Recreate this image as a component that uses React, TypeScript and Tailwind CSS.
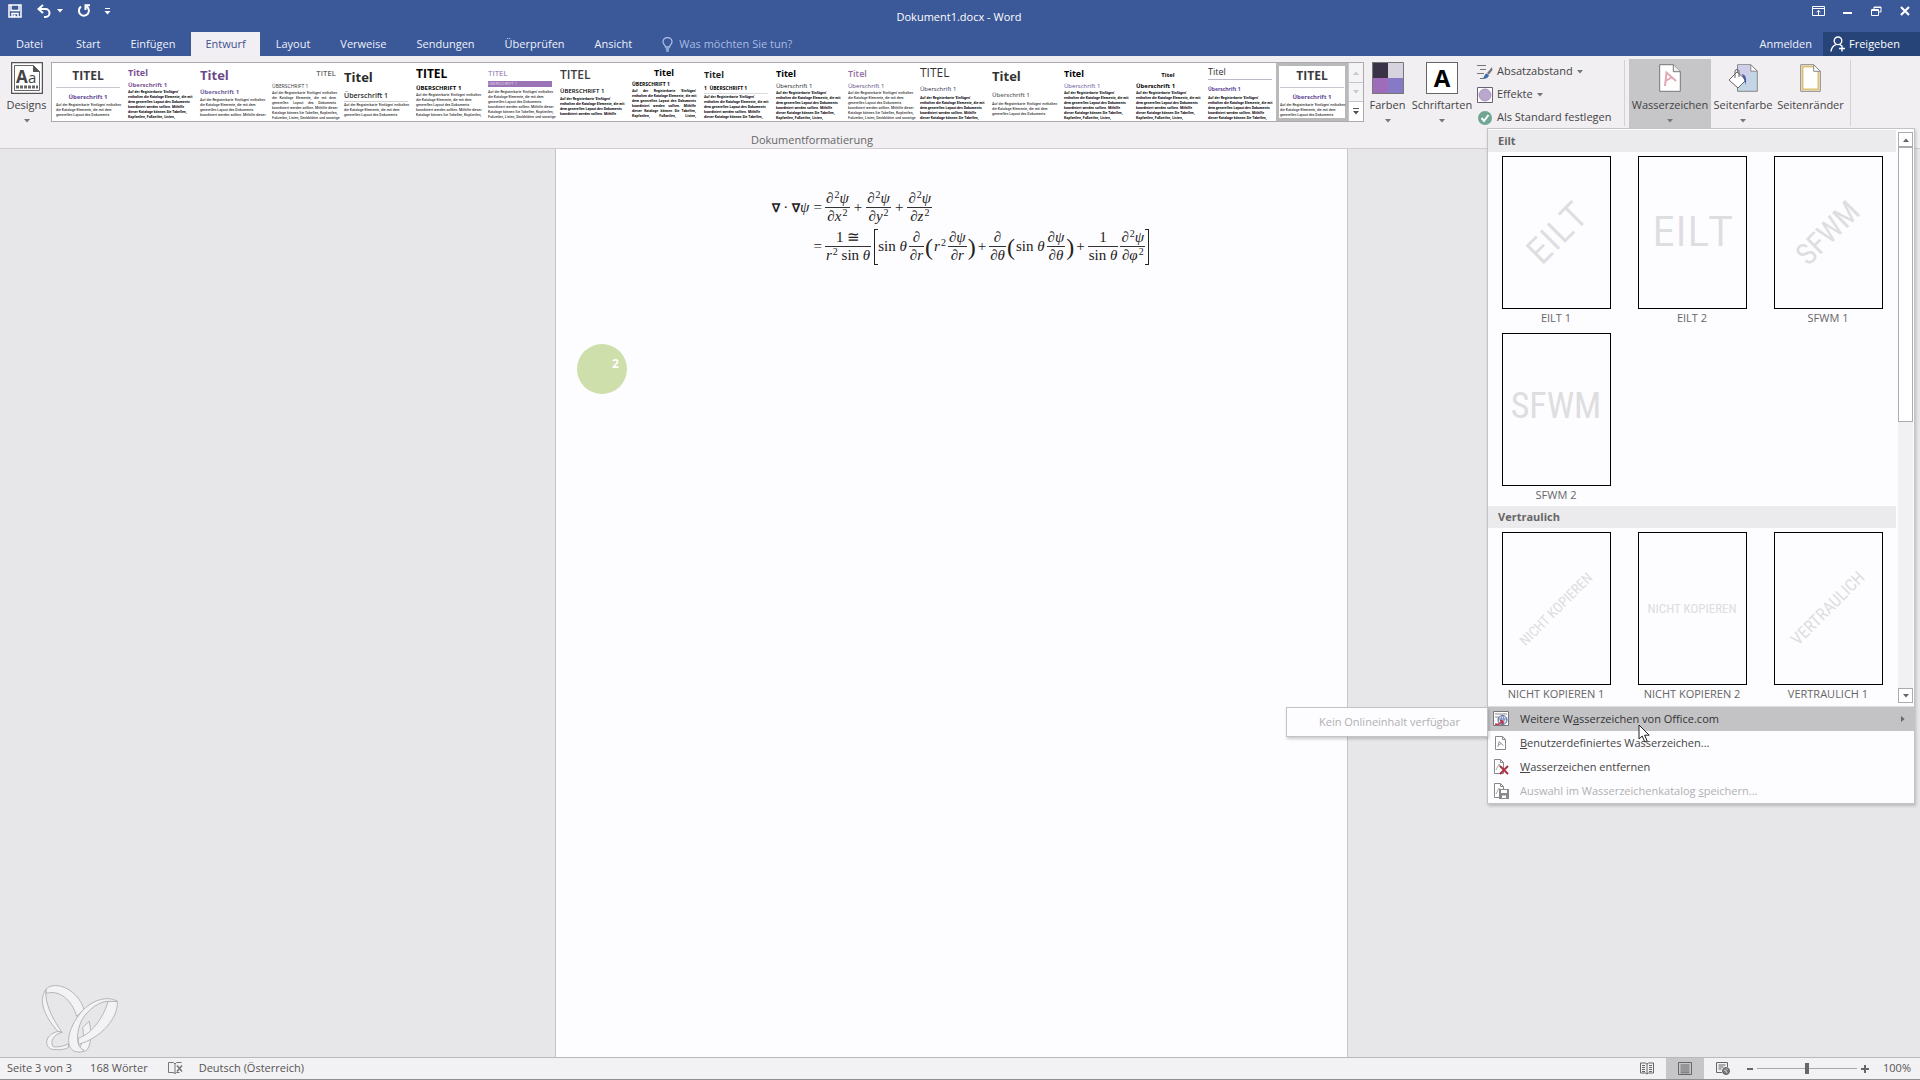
import React from 'react';

interface StyleThumb {
  title: string;
  titleClass: string;
  heading: string;
  headingClass: string;
  lines: number;
  dense?: boolean;
  bodyClass?: string;
}

// Regular body copy wraps a little later than the heavier one
const BODY_LINES = [
  "Auf der Registerkarte 'Einfügen' enthalten",
  'die Kataloge Elemente, die mit dem',
  'generellen Layout des Dokuments',
  'koordiniert werden sollten. Mithilfe dieser',
  'Kataloge können Sie Tabellen, Kopfzeilen,',
  'Fußzeilen, Listen, Deckblätter und sonstige',
];

const DENSE_LINES = [
  "Auf der Registerkarte 'Einfügen'",
  'enthalten die Kataloge Elemente, die mit',
  'dem generellen Layout des Dokuments',
  'koordiniert werden sollten. Mithilfe',
  'dieser Kataloge können Sie Tabellen,',
  'Kopfzeilen, Fußzeilen, Listen,',
];

const OFFICE_THUMB: StyleThumb = {
  title: 'TITEL',
  titleClass: 'h-[24px] justify-center border-b border-[#c9c5cf] text-[12px] font-bold text-[#3d3a42]',
  heading: 'Überschrift 1',
  headingClass: 'h-[14px] justify-center pt-[4px] text-[6px] font-bold text-[#5f4495]',
  lines: 3,
};

const styleThumbs: StyleThumb[] = [
  OFFICE_THUMB,
  {
    title: 'Titel',
    titleClass: 'h-[17px] text-[9px] font-bold text-[#7a4f92]',
    heading: 'Überschrift 1',
    headingClass: 'h-[8px] text-[6px] font-bold text-[#7a4f92]',
    lines: 6,
    dense: true,
  },
  {
    title: 'Titel',
    titleClass: 'h-[22px] text-[13px] font-bold text-[#6b4a8a]',
    heading: 'Überschrift 1',
    headingClass: 'h-[11px] text-[6px] font-bold text-[#6b5b9c]',
    lines: 4,
  },
  {
    title: 'TITEL',
    titleClass: 'h-[18px] justify-end text-[8px] text-[#333]',
    heading: 'ÜBERSCHRIFT 1',
    headingClass: 'h-[8px] text-[5px] text-[#333]',
    lines: 6,
    bodyClass: '[text-align-last:justify]',
  },
  {
    title: 'Titel',
    titleClass: 'h-[26px] text-[13px] font-bold text-[#2b2b2b]',
    heading: 'Überschrift 1',
    headingClass: 'h-[12px] border-b border-[#cfcfcf] text-[7px] font-semibold text-[#2b2b2b]',
    lines: 3,
  },
  {
    title: 'TITEL',
    titleClass: 'h-[20px] text-[12px] font-bold text-black',
    heading: 'ÜBERSCHRIFT 1',
    headingClass: 'h-[8px] text-[6px] font-bold text-black',
    lines: 5,
  },
  {
    title: 'TITEL',
    titleClass: 'h-[17px] text-[8px] text-[#8c6ba8]',
    heading: 'ÜBERSCHRIFT 1',
    headingClass: 'mb-[2px] h-[6px] bg-[#9a74b4] text-[4px] text-[#e5d8ee]',
    lines: 6,
  },
  {
    title: 'TITEL',
    titleClass: 'h-[21px] text-[12px] font-semibold text-[#3d3d3d]',
    heading: 'ÜBERSCHRIFT 1',
    headingClass: 'h-[11px] text-[6px] font-semibold text-black',
    lines: 4,
    dense: true,
  },
  {
    title: 'Titel',
    titleClass: 'h-[17px] justify-center text-[9px] font-bold text-black',
    heading: 'ÜBERSCHRIFT 1',
    headingClass: 'h-[7px] text-[5px] font-bold text-black',
    lines: 6,
    dense: true,
    bodyClass: '[text-align-last:justify]',
  },
  {
    title: 'Titel',
    titleClass: 'h-[20px] text-[9px] font-bold text-[#1f1f1f]',
    heading: '1  ÜBERSCHRIFT 1',
    headingClass: 'h-[10px] border-b border-[#dddddd] text-[5px] font-bold text-black',
    lines: 5,
    dense: true,
  },
  {
    title: 'Titel',
    titleClass: 'h-[18px] text-[9px] font-bold text-black',
    heading: 'Überschrift 1',
    headingClass: 'h-[8px] text-[6px] text-[#222]',
    lines: 6,
    dense: true,
  },
  {
    title: 'Titel',
    titleClass: 'h-[18px] text-[9px] font-semibold text-[#94709f]',
    heading: 'Überschrift 1',
    headingClass: 'h-[8px] text-[6px] text-[#55467e]',
    lines: 6,
  },
  {
    title: 'TITEL',
    titleClass: 'h-[18px] text-[12px] text-[#333]',
    heading: 'Überschrift 1',
    headingClass: 'h-[13px] text-[6px] text-[#2f2a4a]',
    lines: 5,
    dense: true,
  },
  {
    title: 'Titel',
    titleClass: 'h-[25px] text-[13px] font-bold text-[#333]',
    heading: 'Überschrift 1',
    headingClass: 'h-[12px] text-[6px] font-semibold text-[#666]',
    lines: 3,
  },
  {
    title: 'Titel',
    titleClass: 'h-[18px] text-[9px] font-bold text-black',
    heading: 'Überschrift 1',
    headingClass: 'h-[8px] text-[6px] text-[#5a4b9a]',
    lines: 6,
    dense: true,
  },
  {
    title: 'Titel',
    titleClass: 'h-[18px] justify-center pt-[3px] text-[6px] font-bold text-black',
    heading: 'Überschrift 1',
    headingClass: 'h-[8px] text-[6px] font-bold text-black',
    lines: 6,
    dense: true,
  },
  {
    title: 'Titel',
    titleClass: 'h-[16px] border-b border-[#bdb7c8] text-[9px] text-[#333]',
    heading: 'Überschrift 1',
    headingClass: 'h-[15px] pt-[4px] text-[5px] font-bold text-[#5a3f96]',
    lines: 5,
    dense: true,
  },
  OFFICE_THUMB,
];

const tabs = ['Datei', 'Start', 'Einfügen', 'Entwurf', 'Layout', 'Verweise', 'Sendungen', 'Überprüfen', 'Ansicht'];

const watermarkGroups = [
  {
    name: 'Eilt',
    items: [
      { label: 'EILT 1', text: 'EILT', textClass: 'text-[36px] -rotate-45' },
      { label: 'EILT 2', text: 'EILT', textClass: 'mb-[6px] text-[42px]' },
      { label: 'SFWM 1', text: 'SFWM', textClass: "text-[30px] -rotate-45 font-['Roboto_Condensed','Open_Sans',sans-serif]" },
      { label: 'SFWM 2', text: 'SFWM', textClass: "mb-[8px] text-[36px] font-['Roboto_Condensed','Open_Sans',sans-serif]" },
    ],
  },
  {
    name: 'Vertraulich',
    items: [
      { label: 'NICHT KOPIEREN 1', text: 'NICHT KOPIEREN', textClass: "text-[14px] -rotate-45 font-['Roboto_Condensed','Open_Sans',sans-serif]" },
      { label: 'NICHT KOPIEREN 2', text: 'NICHT KOPIEREN', textClass: "text-[13px] font-['Roboto_Condensed','Open_Sans',sans-serif]" },
      { label: 'VERTRAULICH 1', text: 'VERTRAULICH', textClass: "text-[17px] -rotate-45 font-['Roboto_Condensed','Open_Sans',sans-serif]" },
    ],
  },
];

const Caret = ({ className = '' }: { className?: string }) => (
  <svg viewBox="0 0 6 4" className={`h-[4px] w-[6px] ${className}`} fill="currentColor" aria-hidden="true">
    <path d="M0 0h6L3 3.6z" />
  </svg>
);

const TitleBar = () => (
  <div className="grid h-8 grid-cols-3 text-white">
    <div className="flex items-start gap-[10px] pl-2 pt-[4px]">
      <button aria-label="Speichern">
        <svg viewBox="0 0 14 14" className="h-[14px] w-[14px]" fill="none" stroke="currentColor" strokeWidth="1.5">
          <path d="M1 1h12v12H1zM3 1v5.5h8V1" />
          <path d="M4 13V9.5h6V13" />
          <path d="M5.5 10.5h2V13h-2z" fill="currentColor" stroke="none" />
        </svg>
      </button>
      <button aria-label="Rückgängig" className="flex items-center gap-[5px] pl-[5px]">
        <svg viewBox="0 0 15 14" className="h-[14px] w-[15px]" fill="none" stroke="currentColor" strokeWidth="2">
          <path d="M6 1 1.5 5 6 9M2 5h6.5a4 4 0 0 1 0 8H7" />
        </svg>
        <Caret />
      </button>
      <button aria-label="Wiederholen" className="pl-[4px]">
        <svg viewBox="0 0 14 14" className="h-[14px] w-[14px]" fill="none" stroke="currentColor" strokeWidth="2">
          <path d="M4 2.6A5 5 0 1 0 9.5 2.4" />
          <path d="M8.5 6V1.2H13" />
        </svg>
      </button>
      <button aria-label="Symbolleiste anpassen" className="pl-[3px] pt-[4px]">
        <svg viewBox="0 0 7 7" className="h-[7px] w-[7px]" fill="currentColor">
          <path d="M1 0h5v1H1zM0.5 3h6L3.5 6.4z" />
        </svg>
      </button>
    </div>
    <h1 className="flex items-center justify-center pr-[2px] pt-[2px] text-[11px]">Dokument1.docx - Word</h1>
    <div className="flex items-start justify-end gap-[18px] pr-[10px] pt-[6px]">
      <button aria-label="Menüband-Anzeigeoptionen">
        <svg viewBox="0 0 13 10" className="h-[10px] w-[13px]" fill="none" stroke="currentColor">
          <path d="M.5.5h12v9H.5zM.5 2.5h12M6.5 9V4.500M4.500 6.300l2-2 2 2" />
        </svg>
      </button>
      <button aria-label="Minimieren">
        <svg viewBox="0 0 10 10" className="h-[10px] w-[10px]" fill="currentColor">
          <path d="M0 6h9v2H0z" />
        </svg>
      </button>
      <button aria-label="Verkleinern">
        <svg viewBox="0 0 11 10" className="h-[10px] w-[11px]" fill="none" stroke="currentColor">
          <path d="M3 3V1h7v5H8M3 1.500h7M.5 3.500h7v6h-7zM.5 4.500h7" />
        </svg>
      </button>
      <button aria-label="Schließen">
        <svg viewBox="0 0 10 10" className="h-[10px] w-[10px]" fill="none" stroke="currentColor" strokeWidth="2.2">
          <path d="m1 1 8 8M9 1 1 9" />
        </svg>
      </button>
    </div>
  </div>
);

const TabBar = () => (
  <nav className="flex h-6 items-stretch text-[11px] text-[#eef2fb]">
    {tabs.map(tab => (
      <button
        key={tab}
        className={
          tab === 'Entwurf'
            ? 'mx-px bg-[#f1eff3] px-[14px] text-[#3f4f8f]'
            : tab === 'Datei'
              ? 'mr-[2px] px-4'
              : 'px-[15px]'
        }
      >
        {tab}
      </button>
    ))}
    <label className="ml-[15px] flex items-center gap-[6px] text-[#a9bce4]">
      <svg viewBox="0 0 11 15" className="h-[15px] w-[11px]" fill="none" stroke="currentColor" strokeWidth="1.300">
        <path d="M3.500 10C3.500 8 1 7.500 1 4.800a4.500 4.300 0 0 1 9 0C10 7.500 7.500 8 7.500 10zM3.800 12h3.400M4.200 14h2.600" />
      </svg>
      <input
        type="text"
        aria-label="Was möchten Sie tun?"
        placeholder="Was möchten Sie tun?"
        className="w-[160px] bg-transparent outline-none placeholder:text-[#a9bce4]"
      />
    </label>
    <div className="flex-1" />
    <button className="px-[11px]">Anmelden</button>
    <button className="flex w-[97px] items-center gap-[3px] bg-[#264478] pl-[7px] text-white">
      <svg viewBox="0 0 16 16" className="h-4 w-4" fill="none" stroke="currentColor" strokeWidth="1.400">
        <circle cx="8" cy="4.800" r="3.800" />
        <path d="M1 15.500c.3-3.500 2-5.500 4.800-6.800M10 8.600l1.500 1.200M12 9.500v6M9 12.500h6" />
      </svg>
      Freigeben
    </button>
  </nav>
);

const Thumb = ({ thumb, selected }: { thumb: StyleThumb; selected: boolean }) => {
  const source = thumb.dense ? DENSE_LINES : BODY_LINES;

  return (
    <button
      aria-label={`Designformat ${thumb.title}`}
      className={`flex h-[58px] w-[72px] flex-col px-[4px] pt-px text-left leading-none ${
        selected ? 'shadow-[inset_0_0_0_3px_#b9b8ba]' : ''
      }`}
    >
      <span className={`flex w-full items-center ${thumb.titleClass}`}>{thumb.title}</span>
      <span className={`flex w-full items-center whitespace-pre ${thumb.headingClass}`}>{thumb.heading}</span>
      <span
        className={`w-full font-['Roboto_Condensed','Open_Sans',sans-serif] text-[4px] leading-[5px] text-black ${
          thumb.dense ? 'font-semibold' : ''
        } ${thumb.bodyClass || ''}`}
      >
        {source.slice(0, thumb.lines).map(line => (
          <span key={line} className="block whitespace-nowrap">{line}</span>
        ))}
      </span>
    </button>
  );
};

interface BigButtonProps {
  label: string;
  className?: string;
  caret?: boolean;
  children: React.ReactNode;
}

const BigButton = ({ label, className = '', caret = true, children }: BigButtonProps) => (
  <button className={`flex h-[69px] flex-col items-center pt-[3px] ${className}`}>
    <span className="flex h-8 items-center justify-center">{children}</span>
    <span className="mt-[3px] h-4 leading-4">{label}</span>
    {caret && <Caret className="mt-[6px] text-[#777]" />}
  </button>
);

const SmallButton = ({ label, caret, children }: { label: string; caret?: boolean; children: React.ReactNode }) => (
  <button className="flex h-[23px] items-center gap-[4px]">
    {children}
    {label}
    {caret && <Caret className="text-[#777]" />}
  </button>
);

const Ribbon = () => (
  <div className="flex h-[93px] border-b border-[#cfcdd1] bg-[#f1eff2] text-[11px] text-[#444]">
    <div className="flex flex-col pt-[3px]">
      <div className="flex">
        <BigButton label="Designs" className="w-[51px] pl-[2px]">
          <svg viewBox="0 0 32 32" className="h-8 w-8">
            <path d="M.5.5h31v31H.5z" fill="#fff" stroke="#555" strokeWidth="1.500" />
            <path d="M3.500 3.500h19l6 6v19h-25z" fill="#fff" stroke="#666" />
            <path d="M22 3v7h7z" fill="#555" />
            <text x="5" y="21" fontSize="17" fontWeight="bold" fontFamily="Open Sans" fill="#444">A</text>
            <text x="17" y="21" fontSize="15" fontFamily="Open Sans" fill="#444">a</text>
            <path d="M5 25h22" stroke="#666" strokeWidth="3" strokeDasharray="3 1" />
          </svg>
        </BigButton>
        <div className="mt-[3px] flex h-[60px] border border-[#ababad] bg-white">
          {styleThumbs.map((thumb, index) => (
            <Thumb key={index} thumb={thumb} selected={index === styleThumbs.length - 1} />
          ))}
          <div className="flex w-[15px] flex-col divide-y divide-[#c6c6c8] border-l border-[#c6c6c8] bg-[#f4f3f5]">
            <button aria-label="Nach oben" className="flex h-[20px] items-center justify-center text-[#c9c9cb]">
              <Caret className="rotate-180" />
            </button>
            <button aria-label="Nach unten" className="flex h-[19px] items-center justify-center text-[#c9c9cb]">
              <Caret />
            </button>
            <button aria-label="Weitere" className="flex flex-1 flex-col items-center justify-center gap-[2px] bg-white text-[#555]">
              <span className="h-px w-[6px] bg-[#555]" />
              <Caret />
            </button>
          </div>
        </div>
        <BigButton label="Farben" className="w-[47px]">
          <svg viewBox="0 0 32 32" className="h-8 w-8">
            <path d="M0 0h16v16H0z" fill="#3a3348" />
            <path d="M16 0h16v16H16z" fill="#d6d2de" />
            <path d="M0 16h16v16H0z" fill="#9f6bbb" />
            <path d="M16 16h16v16H16z" fill="#8679c6" />
            <path d="M.5.5h31v31H.5z" fill="none" stroke="#777" />
          </svg>
        </BigButton>
        <BigButton label="Schriftarten" className="w-[62px]">
          <span className="flex h-8 w-8 items-center justify-center border border-[#666] bg-white text-[24px] font-bold text-black">
            A
          </span>
        </BigButton>
        <div className="flex w-[151px] flex-col pl-1 pt-px">
          <SmallButton label="Absatzabstand" caret>
            <svg viewBox="0 0 16 16" className="h-4 w-4" fill="none">
              <path d="M0 1.500h9M3 5.500h6M0 9.500h7M3 14.500h4" stroke="#777" />
              <path d="m15 3-5 6 2 1.500L15.500 6z" fill="#777" />
              <path d="M9.500 9.500c-2 .5-2 3.500-4 5 3 1 6-.5 6.500-3.500z" fill="#3f6fa8" />
            </svg>
          </SmallButton>
          <SmallButton label="Effekte" caret>
            <svg viewBox="0 0 16 16" className="h-4 w-4">
              <path d="M.5.5h15v15H.5z" fill="#fff" stroke="#6a6378" />
              <circle cx="8" cy="8" r="6" fill="#bba9cd" stroke="#9c86b4" strokeWidth=".8" />
            </svg>
          </SmallButton>
          <SmallButton label="Als Standard festlegen">
            <svg viewBox="0 0 16 16" className="h-4 w-4">
              <circle cx="8" cy="8" r="7" fill="#6fa593" />
              <path d="m4.500 8 2.500 3 4.500-6" fill="none" stroke="#fff" strokeWidth="2" />
            </svg>
          </SmallButton>
        </div>
      </div>
      <div className="mt-[2px] text-center leading-[18px] text-[#666]">Dokumentformatierung</div>
    </div>
    <div className="mb-[22px] mt-1 flex border-x border-[#d3d2d5] pr-1">
      <BigButton label="Wasserzeichen" className="-mt-px ml-[4px] w-[82px] bg-[#c6c5c7]">
        <svg viewBox="0 0 22 28" className="h-7 w-[22px]">
          <path d="M.7.7h13.600l7 7v19.600H.7z" fill="#fff" stroke="#777" />
          <path d="M14.300.7v7h7" fill="#eee" stroke="#777" />
          <path d="M6 22 7.500 8.500 17 17M6.500 17l6-3.500" fill="none" stroke="#e0a9b3" strokeWidth="2" />
        </svg>
      </BigButton>
      <BigButton label="Seitenfarbe" className="-mt-px w-[64px]">
        <svg viewBox="0 0 30 28" className="h-7 w-[30px]">
          <path d="M9.500.7h13.300l6.500 6.500v20.100H9.500z" fill="#c3d5e6" stroke="#888" />
          <path d="M10 1h12l5 6-17 8z" fill="#cfcdea" />
          <path d="M22.800.7v6.500h6.500z" fill="#fff" stroke="#888" />
          <path d="m1 16 8-8 9 8-8 8z" fill="#fff" stroke="#666" />
          <path d="M7 14V7.500a2 2 0 0 1 4 0V13" fill="none" stroke="#666" />
          <path d="M14 10c4 1 5 5 3.500 11-.5-4-2-6-3.500-11z" fill="#4e5b9c" />
        </svg>
      </BigButton>
      <BigButton label="Seitenränder" caret={false} className="-mt-px w-[71px]">
        <svg viewBox="0 0 21 28" className="h-7 w-[21px]">
          <path d="M.7.7h13l6.600 6.600v20H.7z" fill="#fff" stroke="#888" />
          <path d="M2.500 2.500h10.500l5.500 5.500v17.500h-16z" fill="none" stroke="#dcc37c" strokeWidth="2" />
          <path d="M13.700.7v6.600h6.600z" fill="#fff" stroke="#888" />
        </svg>
      </BigButton>
    </div>
  </div>
);

const Sq = () => <sup className="top-[-5px] pl-px text-[10px] not-italic leading-none">2</sup>;
const Up = ({ children }: { children: React.ReactNode }) => <span className="not-italic">{children}</span>;
const Plus = () => <span className="px-px not-italic">+</span>;

const Frac = ({ num, den }: { num: React.ReactNode; den: React.ReactNode }) => (
  <span className="inline-flex flex-col text-center">
    <span className="h-[18px] border-b border-[#333] px-px leading-[17px]">{num}</span>
    <span className="h-[17px] px-px leading-[17px]">{den}</span>
  </span>
);

const Paren = ({ children }: { children: string }) => (
  <span className="flex w-[6px] justify-center text-[24px] not-italic leading-8">{children}</span>
);

const Formula = () => (
  <div className="grid w-max grid-cols-[42px_auto] font-['Liberation_Serif','Times_New_Roman',serif] text-[15px] italic text-[#222]">
    <div className="flex h-[39px] items-center whitespace-nowrap">
      <Up><b className="text-[12px]">∇</b> · <b className="text-[12px]">∇</b></Up>ψ
    </div>
    <div className="flex h-[39px] items-center gap-[3px]">
      <Up>=</Up>
      <Frac num={<>∂<Sq />ψ</>} den={<>∂x<Sq /></>} />
      <Plus />
      <Frac num={<>∂<Sq />ψ</>} den={<>∂y<Sq /></>} />
      <Plus />
      <Frac num={<>∂<Sq />ψ</>} den={<>∂z<Sq /></>} />
    </div>
    <div />
    <div className="flex h-[39px] items-center gap-[3px]">
      <Up>=</Up>
      <Frac num={<Up>1 ≅</Up>} den={<>r<Sq /> <Up>sin</Up> θ</>} />
      <span className="flex h-[36px] items-center gap-[2px] border-x border-[#222]">
        <span className="-mr-[2px] h-[36px] w-[3px] border-y border-[#222]" />
        <span className="whitespace-nowrap"><Up>sin</Up> θ</span>
        <Frac num="∂" den="∂r" />
        <Paren>(</Paren>
        <span>r<Sq /></span>
        <Frac num="∂ψ" den="∂r" />
        <Paren>)</Paren>
        <Plus />
        <Frac num="∂" den="∂θ" />
        <Paren>(</Paren>
        <span className="whitespace-nowrap"><Up>sin</Up> θ</span>
        <Frac num="∂ψ" den="∂θ" />
        <Paren>)</Paren>
        <Plus />
        <Frac num={<Up>1</Up>} den={<><Up>sin</Up> θ</>} />
        <Frac num={<>∂<Sq />ψ</>} den={<>∂φ<Sq /></>} />
        <span className="-ml-[2px] h-[36px] w-[3px] border-y border-[#222]" />
      </span>
    </div>
  </div>
);

const Butterfly = () => (
  <svg viewBox="125 70 230 208" className="h-[69px] w-[76px]" fill="#f3f3f5" stroke="#b4b4b8" strokeWidth="3" strokeLinejoin="round">
    <path d="M137 86c18-26 92-10 115 60l-22 22c-14-50-52-82-93-70z" />
    <path d="M137 86c-28 38 4 92 36 127l13 3C158 178 132 128 137 86z" />
    <path d="M173 213c-44 10-42 54-12 55 18 2 32 0 44-6v-12c-14 9-30 10-45 10-14-14 2-40 26-44z" />
    <path d="M268 182c6 30 8 66-6 86-8 10-30 8-24-4 14-24 14-44 10-62z" />
    <path d="M353 122c4 50-50 112-118 130v-18c36-12 74-56 90-112z" />
    <path d="M353 122c-28-18-84-6-118 44-34 46-40 98-10 108 12 3 22 2 27-4-26-8-24-58-6-92 18-32 54-56 79-56z" />
  </svg>
);

const DocumentArea = () => (
  <main className="relative flex flex-1 justify-center bg-[#e7e6e9] pr-[18px]">
    <article className="w-[793px] border-x border-[#c6c5ca] bg-[#fdfcfe] pl-[216px] pt-[39px]">
      <Formula />
    </article>
    {/* Click marker and channel logo float over the canvas */}
    <div className="absolute left-[577px] top-[195px] h-[50px] w-[50px] rounded-full bg-[#cfdfab] pl-[35px] pt-[13px] text-[12px] font-bold leading-[14px] text-white">
      2
    </div>
    <div className="absolute bottom-[4px] left-[42px]">
      <Butterfly />
    </div>
  </main>
);

const WatermarkGallery = () => (
  <div className="flex pb-px pt-px">
    <div className="w-[408px]">
      {watermarkGroups.map(group => (
        <section key={group.name} className="mb-[2px]">
          <h2 className="mb-1 h-[22px] bg-[#ebeaec] pl-[10px] text-[11px] font-bold leading-[22px] text-[#666]">{group.name}</h2>
          <div className="grid grid-cols-3 gap-y-[6px]">
            {group.items.map(item => (
              <button key={item.label} className="flex flex-col items-center">
                <span className="flex h-[153px] w-[109px] items-center justify-center border border-black bg-[#fdfcfe]">
                  <span className={`whitespace-nowrap leading-none text-[#dedde0] ${item.textClass}`}>{item.text}</span>
                </span>
                <span className="h-[18px] leading-[18px] text-[#666]">{item.label}</span>
              </button>
            ))}
          </div>
        </section>
      ))}
    </div>
    <div className="mb-[2px] ml-[2px] mt-[2px] flex w-[15px] flex-col bg-[#f1f0f2]">
      <button aria-label="Nach oben" className="flex h-[15px] items-center justify-center border border-[#ababad] bg-white text-[#666]">
        <Caret className="rotate-180" />
      </button>
      <div className="h-[275px] border border-[#ababad] bg-white" />
      <div className="flex-1" />
      <button aria-label="Nach unten" className="flex h-[15px] items-center justify-center border border-[#ababad] bg-white text-[#666]">
        <Caret />
      </button>
    </div>
  </div>
);

const PageOutline = ({ small }: { small?: boolean }) => (
  <>
    <path d={small ? 'M1.500.5h6l3 3v11h-9z' : 'M2.500 1.500h7l3 3v10h-10z'} fill="#fff" stroke="#888" />
    <path d={small ? 'M7.500.5v3h3' : 'M9.500 1.500v3h3'} fill="none" stroke="#888" />
  </>
);

const WatermarkMenu = () => (
  <div className="absolute right-[5px] top-[128px] w-[428px] border border-[#c3c2c5] bg-[#fdfcfe] text-[11px] shadow-[1px_2px_3px_rgba(0,0,0,0.2)]">
    <WatermarkGallery />
    <ul className="border-t border-[#dddcdf] text-[#444]">
      <li className="relative">
        <button className="flex h-6 w-full items-center bg-[#c3c2c5] pl-[5px] text-left text-[#333]">
          <svg viewBox="0 0 16 16" className="h-4 w-4">
            <path d="M.5.5h15v14H.5z" fill="#fff" stroke="#777" />
            <path d="M2 3h12M2 6h4" stroke="#888" />
            <circle cx="9.500" cy="9" r="4.500" fill="#dfe6f2" stroke="#4a66a0" />
            <path d="M5 8h9M9.500 4.500c-2 3-2 6 0 9M9.500 4.500c2 3 2 6 0 9" fill="none" stroke="#4a66a0" strokeWidth=".7" />
            <path d="M2 13c3 1 6 0 7-3M7 9.500l2.500.500L10 13" fill="none" stroke="#b83a4c" strokeWidth="1.600" />
          </svg>
          <span className="flex-1 pl-[11px]">Weitere W<u>a</u>sserzeichen von Office.com</span>
          <Caret className="mr-2 -rotate-90 text-[#666]" />
        </button>
        <div className="absolute right-full top-0 flex h-[30px] w-[202px] items-center border border-[#c3c2c5] bg-[#fdfcfe] pl-[32px] text-[#b1b0b3] shadow-[1px_2px_3px_rgba(0,0,0,0.2)]">
          Kein Onlineinhalt verfügbar
        </div>
        <svg viewBox="0 0 13 19" className="absolute left-[150px] top-[17px] z-10 h-[19px] w-[13px]">
          <path d="M1 1v14l3.200-3 2.600 6 2.400-1-2.600-5.800h4.600z" fill="#fff" stroke="#222" />
        </svg>
      </li>
      <li>
        <button className="flex h-6 w-full items-center pl-[5px]">
          <svg viewBox="0 0 16 16" className="h-4 w-4">
            <PageOutline />
            <path d="M5 12 6 6.500 10.500 10.500M5.300 10l3-1.500" fill="none" stroke="#999" />
          </svg>
          <span className="pl-[11px]"><u>B</u>enutzerdefiniertes Wasserzeichen...</span>
        </button>
      </li>
      <li>
        <button className="flex h-6 w-full items-center pl-[5px]">
          <svg viewBox="0 0 16 16" className="h-4 w-4">
            <PageOutline small />
            <path d="M3 11 6 5l1 3" fill="none" stroke="#aaa" />
            <path d="m7 7 8 8M15 7l-8 8" stroke="#b03048" strokeWidth="2" />
          </svg>
          <span className="pl-[11px]"><u>W</u>asserzeichen entfernen</span>
        </button>
      </li>
      <li>
        <button disabled className="flex h-6 w-full items-center pl-[5px] text-[#b1b0b3]">
          <svg viewBox="0 0 16 16" className="h-4 w-4">
            <PageOutline small />
            <path d="M3 11 6 5l1 3" fill="none" stroke="#aaa" />
            <path d="M6 6h10v10H6z" fill="#8a8a8d" />
            <path d="M8 7h6v3H8zM9 12.500h4V15H9z" fill="#fff" />
          </svg>
          <span className="pl-[11px]">Auswahl im Wasserzeichenkatalog <u>s</u>peichern...</span>
        </button>
      </li>
    </ul>
  </div>
);

const StatusBar = () => (
  <footer className="flex h-[23px] items-stretch border-b border-t border-b-[#8f8e91] border-t-[#b9b8bb] bg-[#f2f1f3] text-[11px] text-[#555]">
    <button className="pl-[7px]">Seite 3 von 3</button>
    <button className="pl-[18px]">168 Wörter</button>
    <button aria-label="Rechtschreibprüfung" className="flex items-center pl-5">
      <svg viewBox="0 0 15 13" className="h-[13px] w-[15px]" fill="none" stroke="#777">
        <path d="M7 11.500V2L5.500.5h-5v10H5zM7 2 8.500.5h5M7 11.500l1.500-1h3" />
        <path d="m9 3.500 5 6M14 3.500l-5 6" strokeWidth="1.500" />
      </svg>
    </button>
    <button className="pl-4">Deutsch (Österreich)</button>
    <div className="flex-1" />
    <button aria-label="Lesemodus" className="flex w-[38px] items-center justify-center">
      <svg viewBox="0 0 14 13" className="h-[13px] w-[14px]" fill="none" stroke="#666">
        <path d="M.5 1h5L7 2l1.500-1h5v10h-5L7 12l-1.500-1h-5zM7 2v10M2 3.500h3M2 5.500h3M2 7.500h3M2 9.500h3M9 3.500h3M9 5.500h3M9 7.500h3M9 9.500h3" />
      </svg>
    </button>
    <button aria-label="Drucklayout" className="flex w-[38px] items-center justify-center bg-[#c6c5c8]">
      <svg viewBox="0 0 14 13" className="h-[13px] w-[14px]" fill="none" stroke="#666">
        <path d="M.5.5h13v12H.5zM2.500 3h9M2.500 5h9M2.500 7h9M2.500 9h9M2.500 10.800h9" />
      </svg>
    </button>
    <button aria-label="Weblayout" className="flex w-[38px] items-center justify-center">
      <svg viewBox="0 0 14 13" className="h-[13px] w-[14px]" fill="none" stroke="#666">
        <path d="M6 10.500H.5V.5h11V5M2.500 3h7M2.500 5h5M2.500 7h3" />
        <circle cx="10" cy="9" r="3.500" fill="#777" />
        <path d="M8 8l2 1 1 2M10 6.500l1.500 1.500" stroke="#ddd" />
      </svg>
    </button>
    <div className="flex items-center gap-1 pl-[5px]">
      <button aria-label="Verkleinern" className="h-[2px] w-[6px] bg-[#666]" />
      <input
        type="range"
        aria-label="Zoom"
        min={0}
        max={100}
        defaultValue={50}
        className="h-[11px] w-[100px] appearance-none bg-[linear-gradient(#a9a8ab,#a9a8ab)] bg-[length:100%_1px] bg-center bg-no-repeat [&::-webkit-slider-thumb]:h-[11px] [&::-webkit-slider-thumb]:w-[4px] [&::-webkit-slider-thumb]:appearance-none [&::-webkit-slider-thumb]:bg-[#666]"
      />
      <button aria-label="Vergrößern">
        <svg viewBox="0 0 8 8" className="h-2 w-2" stroke="#666" strokeWidth="2">
          <path d="M0 4h8M4 0v8" />
        </svg>
      </button>
    </div>
    <button className="w-[51px] pr-[9px] text-right">100%</button>
  </footer>
);

export default function App() {
  return (
    <div className="relative flex min-h-screen flex-col font-['Open_Sans','Segoe_UI',sans-serif]">
      <header className="bg-[#3b5898]">
        <TitleBar />
        <TabBar />
      </header>
      <Ribbon />
      <DocumentArea />
      <StatusBar />
      <WatermarkMenu />
    </div>
  );
}
